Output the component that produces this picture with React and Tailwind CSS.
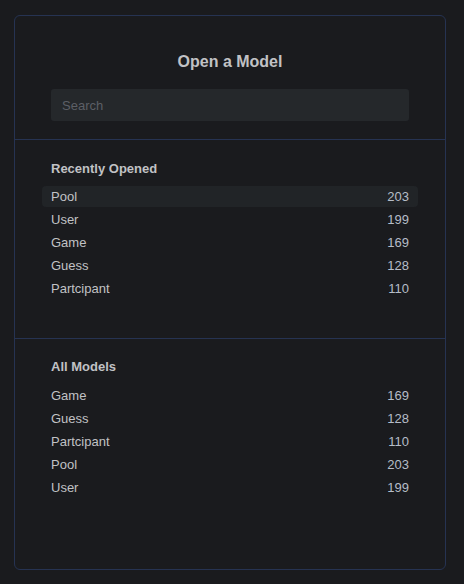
import React from 'react';

const recent = [
  { name: 'Pool', count: 203 },
  { name: 'User', count: 199 },
  { name: 'Game', count: 169 },
  { name: 'Guess', count: 128 },
  { name: 'Partcipant', count: 110 },
];

const all = [
  { name: 'Game', count: 169 },
  { name: 'Guess', count: 128 },
  { name: 'Partcipant', count: 110 },
  { name: 'Pool', count: 203 },
  { name: 'User', count: 199 },
];

const ModelList = ({ title, items, active, listClass }) => (
  <div className="px-[36px]">
    <h3 className="text-[13px] leading-[20px] font-bold text-[#c1c2c5]">{title}</h3>
    <ul className={`${listClass} flex flex-col gap-[2px]`}>
      {items.map((item, i) => (
        <li
          key={item.name}
          className={`-mx-[9px] px-[9px] h-[21px] flex items-center justify-between rounded-[4px] text-[13px] ${
            i === active ? 'bg-[#212427]' : ''
          }`}
        >
          <span className="text-[#c1c2c5]">{item.name}</span>
          <span className="text-[#b6bdc8]">{item.count}</span>
        </li>
      ))}
    </ul>
  </div>
);

export default function App() {
  return (
    <div className="min-h-screen bg-[#1a1b1e] pt-[15px] pl-[14px] font-['Liberation_Sans',Arial,sans-serif]">
      <div className="w-[432px] h-[555px] border border-[#263352] rounded-[6px] bg-[#1a1b1e] flex flex-col">
        <div className="px-[36px] pt-[34px] pb-[18px] border-b border-[#263352]">
          <h2 className="text-center text-[16px] leading-[24px] font-bold text-[#c1c2c5]">Open a Model</h2>
          <input
            type="text"
            placeholder="Search"
            className="mt-[15px] w-full h-[32px] px-[11px] rounded-[3px] bg-[#25282b] text-[13px] text-[#c1c2c5] placeholder:text-[#5c5f66] outline-none"
          />
        </div>
        <div className="pt-[19px] pb-[39px] border-b border-[#263352]">
          <ModelList title="Recently Opened" items={recent} active={0} listClass="mt-[7px]" />
        </div>
        <div className="pt-[18px]">
          <ModelList title="All Models" items={all} listClass="mt-[8px]" />
        </div>
      </div>
    </div>
  );
}
